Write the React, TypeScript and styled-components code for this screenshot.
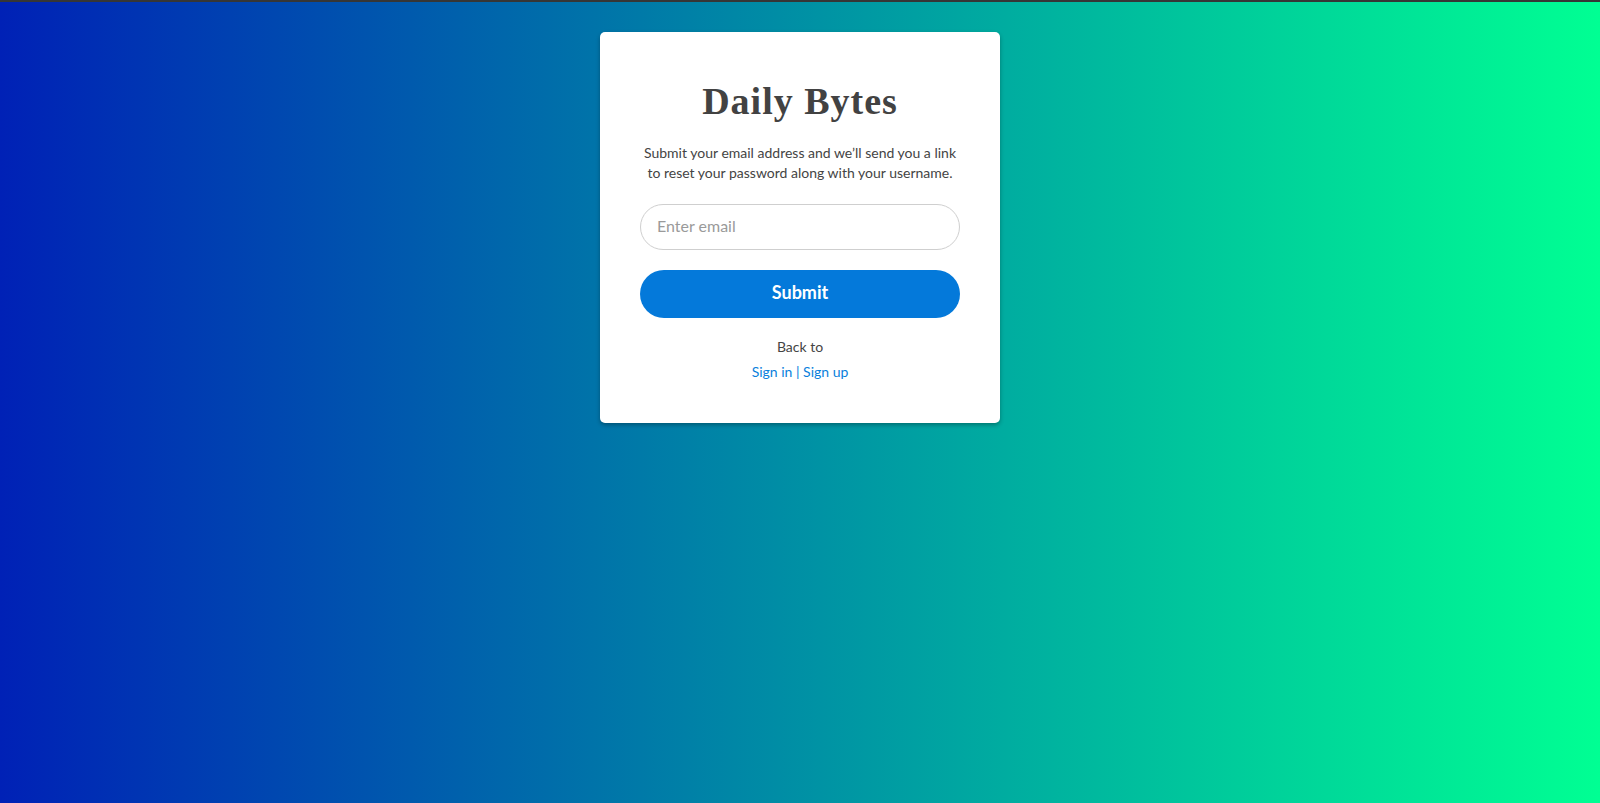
import React from "react";
import styled, { createGlobalStyle } from "styled-components";

const GlobalStyle = createGlobalStyle`
  * { box-sizing: border-box; }
  html, body { margin: 0; padding: 0; height: 100%; }
  body {
    font-family: Lato, "Open Sans", "Liberation Sans", sans-serif;
    color: #444;
  }
  #root { min-height: 100%; }
`;

const Page = styled.main`
  min-height: 100vh;
  border-top: 2px solid #363636;
  background: linear-gradient(90deg, #0021b6 0%, #00ff93 100%);
  display: flex;
  justify-content: center;
  align-items: flex-start;
  padding-top: 30px;
`;

const Card = styled.section`
  width: 400px;
  background: #fff;
  border-radius: 5px;
  box-shadow: 0 2px 4px rgba(0, 0, 0, 0.3);
  padding: 47px 40px 39px;
  display: flex;
  flex-direction: column;
  align-items: stretch;
  text-align: center;
`;

const Title = styled.h1`
  margin: 0;
  font-family: "Liberation Serif", "DejaVu Serif", serif;
  font-weight: 700;
  font-size: 38px;
  line-height: 44px;
  letter-spacing: 1px;
  color: #424242;
`;

const Lead = styled.p`
  margin: 20px 0 0;
  font-size: 14px;
  line-height: 20px;
  color: #444;
`;

const EmailInput = styled.input`
  margin-top: 21px;
  height: 46px;
  width: 100%;
  border: 1px solid #cfcfcf;
  border-radius: 23px;
  padding: 0 16px 4px;
  font-family: inherit;
  font-size: 16px;
  color: #444;
  outline: none;
  &::placeholder { color: #9a9a9a; }
`;

const SubmitButton = styled.button`
  margin-top: 20px;
  height: 48px;
  width: 100%;
  border: none;
  border-radius: 24px;
  padding: 0 0 4px;
  background: #0479da;
  color: #fff;
  font-family: inherit;
  font-weight: 700;
  font-size: 18px;
  cursor: pointer;
`;

const Footer = styled.div`
  margin-top: 17px;
  font-size: 14px;
  line-height: 24px;
  color: #444;
`;

const Links = styled.div`
  margin-top: 1px;
  color: #0a7fdc;
`;

const Link = styled.a`
  color: #0a7fdc;
  text-decoration: none;
`;

export default function App() {
  return (
    <>
      <GlobalStyle />
      <Page>
        <Card>
          <Title>Daily Bytes</Title>
          <Lead>
            Submit your email address and we’ll send you a link
            <br />
            to reset your password along with your username.
          </Lead>
          <EmailInput type="email" placeholder="Enter email" />
          <SubmitButton type="button">Submit</SubmitButton>
          <Footer>
            <div>Back to</div>
            <Links>
              <Link href="#">Sign in</Link> | <Link href="#">Sign up</Link>
            </Links>
          </Footer>
        </Card>
      </Page>
    </>
  );
}
